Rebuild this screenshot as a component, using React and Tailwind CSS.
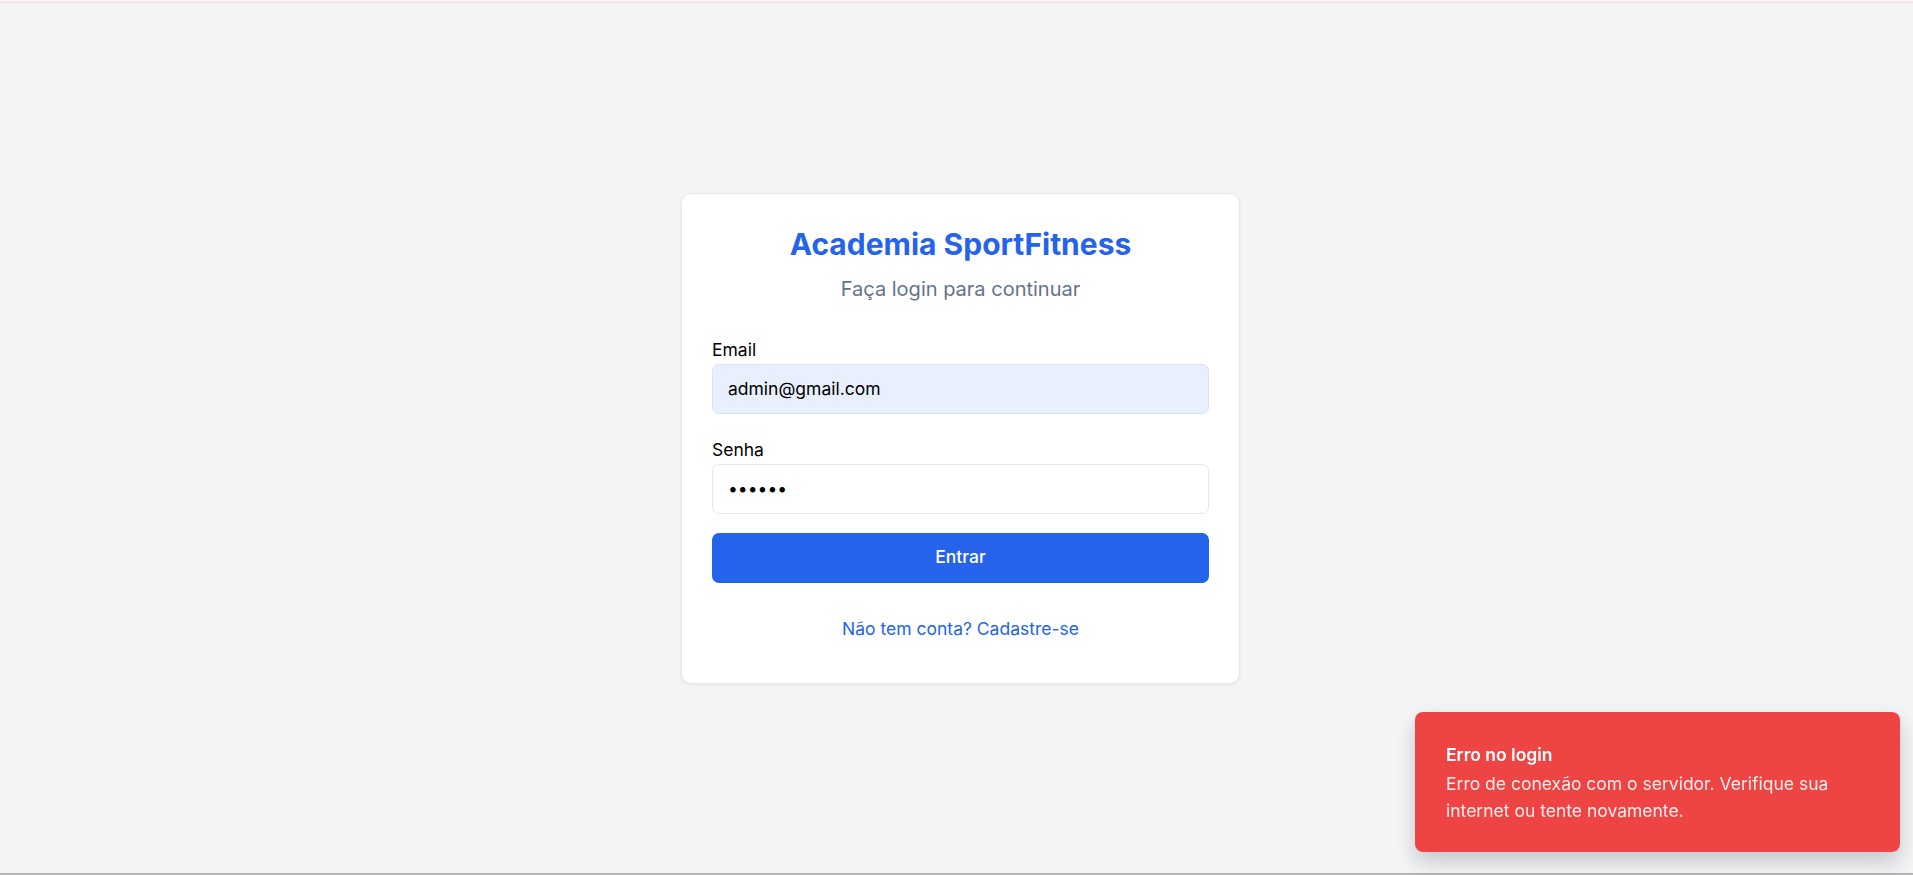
import React, { useState } from "react";

const FONT = { fontFamily: "Inter, 'Noto Sans', 'Liberation Sans', sans-serif" };

function Toast({ title, description }) {
  return (
    <div className="fixed right-[13px] bottom-[23px] w-[485px] rounded-[8px] bg-[#ef4444] px-[31px] pt-[30px] pb-[28px] text-white shadow-[0_10px_20px_rgba(0,0,0,0.18)]">
      <div className="text-[17.5px] leading-[25px] font-semibold">{title}</div>
      <div className="mt-[3px] text-[17.5px] leading-[27px] text-white/90">{description}</div>
    </div>
  );
}

export default function App() {
  const [email, setEmail] = useState("admin@gmail.com");
  const [senha, setSenha] = useState("123456");

  return (
    <div className="flex h-[875px] flex-col bg-[#f3f4f6]" style={FONT}>
      <div className="h-[3px] border-b border-[#f1dbe8] bg-[#fdf0f7]" />

      <main className="flex flex-1 items-center justify-center pl-[8px]">
        <div className="w-[559px] rounded-[10px] border border-[#e5e7eb] bg-white px-[30px] pt-[28px] pb-[42px] shadow-[0_1px_3px_rgba(0,0,0,0.06)]">
          <h1 className="text-center text-[30px] leading-[45px] font-bold text-[#2563eb]">
            Academia SportFitness
          </h1>
          <p className="mt-[7px] text-center text-[20px] leading-[30px] text-[#64748b]">
            Faça login para continuar
          </p>

          <form className="mt-[33px]" onSubmit={(e) => e.preventDefault()}>
            <label className="block text-[17.5px] leading-[25px] font-normal text-black">Email</label>
            <input
              type="email"
              value={email}
              onChange={(e) => setEmail(e.target.value)}
              className="mt-[2px] block h-[50px] w-full rounded-[7px] border border-[#dbe3ef] bg-[#e8f0fe] px-[15px] text-[17.5px] text-black outline-none"
            />

            <label className="mt-[23px] block text-[17.5px] leading-[25px] font-normal text-black">Senha</label>
            <input
              type="password"
              value={senha}
              onChange={(e) => setSenha(e.target.value)}
              className="mt-[2px] block h-[50px] w-full rounded-[7px] border border-[#e2e8f0] bg-white px-[15px] text-[17.5px] text-black outline-none"
            />

            <button
              type="submit"
              className="mt-[19px] flex h-[50px] w-full items-center justify-center rounded-[7px] bg-[#2563eb] text-[17.5px] font-medium text-white"
            >
              Entrar
            </button>
          </form>

          <p className="mt-[33px] text-center text-[17.5px] leading-[25px] text-[#2563eb]">
            Não tem conta? Cadastre-se
          </p>
        </div>
      </main>

      <div className="h-[2px] bg-[#b4b4b4]" />

      <Toast
        title="Erro no login"
        description="Erro de conexão com o servidor. Verifique sua internet ou tente novamente."
      />
    </div>
  );
}
